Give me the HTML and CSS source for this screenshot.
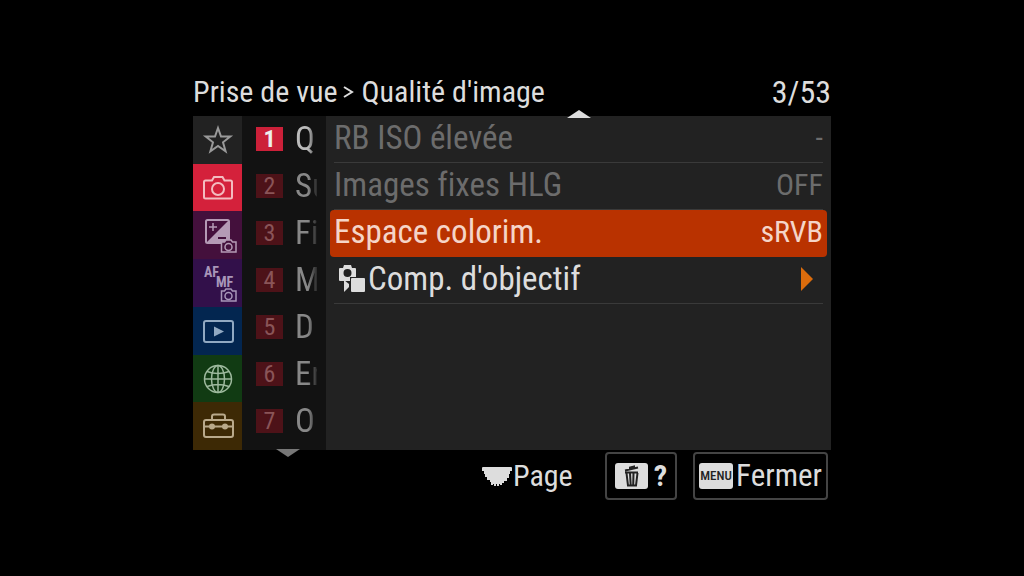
FILE: index.html
```html
<!DOCTYPE html>
<html lang="fr">
<head>
    <meta charset="UTF-8">
    <meta name="viewport" content="width=device-width, initial-scale=1.0">
    <title>Prise de vue - Qualité d'image</title>
    <link rel="stylesheet" href="styles.css">
</head>
<body>
    <div class="screen">
        <header class="header">
            <h1>Prise de vue<svg class="crumb" viewBox="0 0 12 16"><path d="M2 3l8 5-8 5"/></svg>Qualité d'image</h1>
            <span class="count">3/53</span>
        </header>

        <main class="menu">
            <nav class="tabs">
                <button class="tab star" type="button" aria-label="Mon menu">
                    <svg viewBox="0 0 48 48"><path d="M24 12l3 8.500h9.300l-7.300 5.800 2.600 9-7.600-5.300-7.600 5.300 2.600-9-7.300-5.800h9.300z"/></svg>
                </button>
                <button class="tab shooting" type="button" aria-label="Prise de vue">
                    <svg viewBox="0 0 48 48"><path d="M11.500 16.500h6.500l2-3.500h8.500l2 3.500h6a1.500 1.500 0 0 1 1.500 1.500v15a1.500 1.500 0 0 1-1.500 1.500h-25a1.500 1.500 0 0 1-1.500-1.500v-15a1.500 1.500 0 0 1 1.500-1.500z"/><circle cx="24" cy="25" r="6"/></svg>
                </button>
                <button class="tab exposure" type="button" aria-label="Exposition">
                    <svg viewBox="0 0 48 48"><rect x="12" y="9" width="23" height="23" rx="1.500"/><path class="solid" d="M35 9v23H12z"/><path class="thin" d="M15 16h8M19 12v8"/><path class="dark" d="M24 27h8"/><path class="thin camera" d="M27.500 31h3l1.500-2h5l1.500 2h3.500v10H27.500z"/><circle class="thin" cx="34.500" cy="36" r="3.500"/></svg>
                </button>
                <button class="tab focus" type="button" aria-label="Mise au point">
                    <svg viewBox="0 0 48 48"><text x="10" y="18">AF</text><text x="22" y="28">MF</text><path class="thin" d="M27.500 32h3l1.500-2h5l1.500 2h3.500v10H27.500z"/><circle class="thin" cx="34.500" cy="37" r="3.500"/></svg>
                </button>
                <button class="tab playback" type="button" aria-label="Lecture">
                    <svg viewBox="0 0 48 48"><rect x="10" y="14" width="29" height="21" rx="2"/><path class="solid" d="M20 19.500l10 5-10 5z"/></svg>
                </button>
                <button class="tab network" type="button" aria-label="Réseau">
                    <svg viewBox="0 0 48 48"><g class="thin"><circle cx="24" cy="25" r="13.500"/><ellipse cx="24" cy="25" rx="6.500" ry="13.500"/><path d="M24 11.500v27M10.500 25h27M13 17.500q11 4 22 0M13 32.500q11-4 22 0"/></g></svg>
                </button>
                <button class="tab setup" type="button" aria-label="Réglage">
                    <svg viewBox="0 0 48 48"><rect x="10" y="18" width="29" height="17" rx="2"/><path d="M18 18v-3.500a2 2 0 0 1 2-2h9a2 2 0 0 1 2 2V18M10 24.500h29"/><circle class="solid" cx="18" cy="24.500" r="3"/><circle class="solid" cx="31" cy="24.500" r="3"/></svg>
                </button>
            </nav>

            <div class="groups">
                <button class="group active" type="button"><span class="number">1</span><span class="name">Q</span></button>
                <button class="group" type="button"><span class="number">2</span><span class="name">Su</span></button>
                <button class="group" type="button"><span class="number">3</span><span class="name">Fi</span></button>
                <button class="group" type="button"><span class="number">4</span><span class="name">M</span></button>
                <button class="group" type="button"><span class="number">5</span><span class="name">D</span></button>
                <button class="group" type="button"><span class="number">6</span><span class="name">En</span></button>
                <button class="group" type="button"><span class="number">7</span><span class="name">O</span></button>
                <svg class="arrow-down" viewBox="0 0 24 8"><path d="M0 0h24L12 8z"/></svg>
            </div>

            <div class="items">
                <svg class="arrow-up" viewBox="0 0 24 8"><path d="M0 8h24L12 0z"/></svg>
                <button class="item off" type="button"><span class="label">RB ISO élevée</span><span>-</span></button>
                <button class="item off" type="button"><span class="label">Images fixes HLG</span><span>OFF</span></button>
                <button class="item selected" type="button"><span class="label">Espace colorim.</span><span>sRVB</span></button>
                <button class="item" type="button">
                    <svg class="lens" viewBox="0 0 28 30"><path fill-rule="evenodd" d="M2 4h3l1-3h7l1 3h3q1 0 1 1v8h-6v4H2q-1 0-1-1V5q0-1 1-1zM9.500 5a4 4 0 1 0 0 8 4 4 0 0 0 0-8z"/><path d="M6 16l5 4v3l-5 5zM14 14h12q1 0 1 1v12q0 1-1 1H14q-1 0-1-1V15q0-1 1-1z"/></svg>
                    <span class="label">Comp. d'objectif</span>
                    <svg class="more" viewBox="0 0 12 24"><path d="M0 0l12 12L0 24z"/></svg>
                </button>
            </div>
        </main>

        <footer class="footer">
            <span class="page"><svg class="dial" viewBox="0 0 32 22"><path d="M2 2h28q1 0 1 1v3h-2v3h-1v4h-2v3h-3v2h-2v2h-2v-1h-1v2h-2v-2h-1v2h-2v-2h-1v1h-2v-3H9v-2H6v-3H4V9H3V6H1V3q0-1 1-1z"/></svg>Page</span>
            <button class="key" type="button" aria-label="Aide">
                <svg class="trash" viewBox="0 0 33 26"><rect width="33" height="26" rx="3"/><path class="lines" d="M10 7.500l13-3M15 6V4.500l4-1V5M10 9.500h13M11.500 10l1.500 12.500h8L22.500 10M15 10l.7 12M18.500 10l-.3 12"/></svg>
                <b>?</b>
            </button>
            <button class="key" type="button"><span class="badge">MENU</span><span>Fermer</span></button>
        </footer>
    </div>
</body>
</html>
```

FILE: styles.css
```css
* {
    box-sizing: border-box;
}
body {
    margin: 0;
    background: #000;
    color: #ddd;
    font-family: 'Roboto Condensed', 'Liberation Sans Narrow', 'Roboto', sans-serif;
    font-size: 30px;
    line-height: 36px;
    font-variant-ligatures: none;
}
button {
    margin: 0;
    padding: 0;
    border: none;
    background: none;
    color: inherit;
    font: inherit;
    font-variant-ligatures: none;
    cursor: pointer;
}
svg {
    display: block;
    flex: none;
    fill: currentColor;
}
.screen {
    width: 62.3%;
    margin: 0 auto;
    padding-top: 74px;
}
.header {
    display: flex;
    justify-content: space-between;
    height: 42px;
    white-space: nowrap;
}
h1 {
    display: flex;
    align-items: center;
    height: 36px;
    margin: 0;
    font-size: 30px;
    font-weight: normal;
}
.count {
    font-size: 32px;
}
.crumb {
    width: 12px;
    height: 16px;
    margin: 0 8px 0 4px;
    fill: none;
    stroke: currentColor;
    stroke-width: 2;
}
.menu {
    display: grid;
    grid-template-columns: 49px 84px 1fr;
    min-height: 334px;
}
.tabs {
    display: grid;
    grid-template-rows: repeat(7, 1fr);
}
.tab {
    display: flex;
    align-items: center;
    justify-content: center;
    overflow: hidden;
}
.tab svg {
    width: 48px;
    height: 48px;
    margin: -1px 0;
    fill: none;
    stroke: currentColor;
    stroke-width: 2;
}
.tab .solid {
    fill: currentColor;
    stroke: none;
}
.tab .thin {
    stroke-width: 1.5;
}
.tab .dark {
    stroke: #44103c;
}
.tab text {
    fill: currentColor;
    stroke: none;
    font-size: 14px;
    font-weight: bold;
}
.star {
    background: #222;
    color: #999;
}
.shooting {
    background: #d4213b;
    color: #f3bcc0;
}
.exposure {
    background: #44103c;
    color: #b49ab5;
}
.exposure .camera {
    fill: #44103c;
}
.focus {
    background: #32104a;
    color: #a896b9;
}
.playback {
    background: #032650;
    color: #91a9c2;
}
.network {
    background: #113b13;
    color: #9db99d;
}
.setup {
    background: #3d2905;
    color: #b9a98b;
}
.groups {
    position: relative;
    background: #121212;
}
.group {
    display: flex;
    align-items: center;
    gap: 12px;
    width: 100%;
    height: 47px;
    padding: 0 0 2px 14px;
    color: #888;
}
.number {
    width: 27px;
    height: 24px;
    background: #4d1218;
    color: #8a5558;
    font-size: 24px;
    line-height: 25px;
}
.name {
    width: 22px;
    overflow: hidden;
    font-size: 33px;
    text-align: left;
    white-space: nowrap;
    -webkit-mask-image: linear-gradient(to right, #000 60%, rgba(0, 0, 0, 0.2));
    mask-image: linear-gradient(to right, #000 60%, rgba(0, 0, 0, 0.2));
}
.active {
    color: #bbb;
}
.active .number {
    background: #cc2039;
    color: #eee;
    font-weight: bold;
}
.arrow-down {
    position: absolute;
    left: 34px;
    bottom: -7px;
    width: 24px;
    height: 8px;
    color: #777;
}
.items {
    position: relative;
    padding: 0 4px;
    background: #222;
}
.arrow-up {
    position: absolute;
    top: -6px;
    left: 50%;
    width: 24px;
    height: 8px;
    margin-left: -12px;
}
.item {
    display: flex;
    align-items: center;
    width: 100%;
    height: 47px;
    padding: 0 4px 3px;
    background: linear-gradient(#3a3a3a, #3a3a3a) 4px 100% / calc(100% - 8px) 1px no-repeat;
    white-space: nowrap;
}
.off {
    color: #6c6c6c;
}
.selected {
    border-radius: 4px;
    background: #b93200;
    color: #f5d5c8;
}
.lens {
    width: 28px;
    height: 30px;
    margin: 0 2px 0 4px;
}
.label {
    flex: 1;
    font-size: 33px;
    text-align: left;
}
.more {
    width: 12px;
    height: 24px;
    margin-right: 10px;
    color: #dc6c0c;
}
.footer {
    display: flex;
    align-items: center;
    justify-content: flex-end;
    gap: 16px;
    padding: 2px 3px 0 0;
}
.page {
    display: flex;
    align-items: center;
    margin-right: 16px;
}
.dial {
    width: 32px;
    height: 22px;
}
.key {
    display: flex;
    align-items: center;
    gap: 3px;
    height: 48px;
    padding: 0 4px;
    border: 2px solid #444;
    border-radius: 4px;
}
.trash {
    width: 33px;
    height: 26px;
    margin: 0 3px 0 4px;
}
.lines {
    fill: none;
    stroke: #222;
    stroke-width: 2;
}
.key b {
    padding-right: 4px;
}
.key span {
    font-size: 31px;
}
.key .badge {
    width: 34px;
    border-radius: 3px;
    background: #ddd;
    color: #222;
    font-size: 13px;
    font-weight: 500;
    line-height: 26px;
}
```
